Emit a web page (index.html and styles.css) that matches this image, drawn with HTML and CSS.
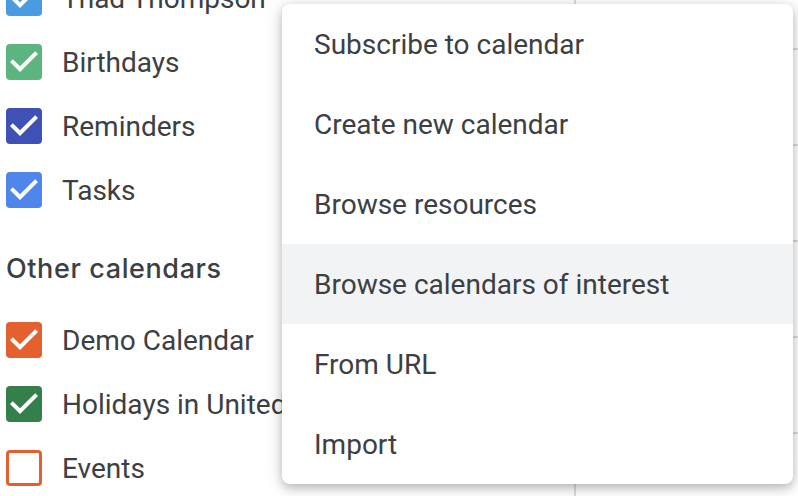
FILE: index.html
```html
<!DOCTYPE html>
<html lang="en">
<head>
    <meta charset="UTF-8">
    <meta name="viewport" content="width=device-width, initial-scale=1.0">
    <title>Calendars</title>
    <link rel="stylesheet" href="styles.css">
</head>
<body>
    <div class="page">
        <aside class="sidebar">
            <ul class="cal-list">
                <li class="cal-item"><span class="box blue"><svg viewBox="3 3 18 18"><path d="M10 17l-5-5 1.41-1.41L10 14.17l7.59-7.59L19 8l-9 9z"/></svg></span>Thad Thompson</li>
                <li class="cal-item"><span class="box green"><svg viewBox="3 3 18 18"><path d="M10 17l-5-5 1.41-1.41L10 14.17l7.59-7.59L19 8l-9 9z"/></svg></span>Birthdays</li>
                <li class="cal-item"><span class="box indigo"><svg viewBox="3 3 18 18"><path d="M10 17l-5-5 1.41-1.41L10 14.17l7.59-7.59L19 8l-9 9z"/></svg></span>Reminders</li>
                <li class="cal-item"><span class="box sky"><svg viewBox="3 3 18 18"><path d="M10 17l-5-5 1.41-1.41L10 14.17l7.59-7.59L19 8l-9 9z"/></svg></span>Tasks</li>
            </ul>
            <h2 class="cal-heading">Other calendars</h2>
            <ul class="cal-list">
                <li class="cal-item"><span class="box orange"><svg viewBox="3 3 18 18"><path d="M10 17l-5-5 1.41-1.41L10 14.17l7.59-7.59L19 8l-9 9z"/></svg></span>Demo Calendar</li>
                <li class="cal-item"><span class="box forest"><svg viewBox="3 3 18 18"><path d="M10 17l-5-5 1.41-1.41L10 14.17l7.59-7.59L19 8l-9 9z"/></svg></span>Holidays in United States</li>
                <li class="cal-item"><span class="box empty"></span>Events</li>
            </ul>
        </aside>

        <div class="grid">
            <div class="grid-row"></div>
            <div class="grid-row"></div>
            <div class="grid-row"></div>
            <div class="grid-row"></div>
            <div class="grid-row"></div>
            <div class="grid-row"></div>
        </div>

        <!-- меню добавления календаря -->
        <ul class="menu">
            <li class="menu-item">Subscribe to calendar</li>
            <li class="menu-item">Create new calendar</li>
            <li class="menu-item">Browse resources</li>
            <li class="menu-item active">Browse calendars of interest</li>
            <li class="menu-item">From URL</li>
            <li class="menu-item">Import</li>
        </ul>
    </div>
</body>
</html>
```

FILE: styles.css
```css
body {
    margin: 0;
    padding: 0;
    background-color: #fff;
    color: #3c4043;
    font-family: 'Roboto', 'Liberation Sans', sans-serif;
}

.page {
    position: relative;
    width: 798px;
    height: 496px;
    overflow: hidden;
    display: flex;
}

.sidebar {
    width: 574px;
    flex-shrink: 0;
    margin-top: -34px;
    white-space: nowrap;
    overflow: hidden;
}

.cal-list {
    list-style: none;
    margin: 0;
    padding: 0;
}

.cal-item {
    display: flex;
    align-items: center;
    height: 64px;
    padding-left: 6px;
    font-size: 28px;
    gap: 20px;
}

.box {
    width: 36px;
    height: 36px;
    border-radius: 4px;
    flex-shrink: 0;
    box-sizing: border-box;
}

.box svg {
    display: block;
    width: 36px;
    height: 36px;
    fill: #fff;
}

.blue { background-color: #4a9be0; }
.green { background-color: #5cb57f; }
.indigo { background-color: #3f51b5; }
.sky { background-color: #4f86ec; }
.orange { background-color: #e4612f; }
.forest { background-color: #33804a; }

.empty {
    border: 3px solid #e4612f;
}

.cal-heading {
    margin: 0;
    height: 86px;
    box-sizing: border-box;
    padding: 32px 0 0 6px;
    font-family: 'Inter', 'Open Sans', sans-serif;
    font-weight: 500;
    font-size: 27px;
    line-height: 30px;
    letter-spacing: 0.6px;
}

.grid {
    flex: 1;
    border-left: 2px solid #dadce0;
    padding-top: 48px;
}

.grid-row {
    height: 96px;
    border-top: 2px solid #dadce0;
    box-sizing: border-box;
}

.menu {
    position: absolute;
    left: 282px;
    top: 4px;
    width: 511px;
    margin: 0;
    padding: 0;
    list-style: none;
    background-color: #fff;
    border-radius: 8px;
    box-shadow: 0 4px 10px rgba(0, 0, 0, 0.22), 0 2px 22px rgba(0, 0, 0, 0.12);
    overflow: hidden;
}

.menu-item {
    height: 80px;
    display: flex;
    align-items: center;
    padding-left: 32px;
    font-size: 28px;
}

.menu-item.active {
    background-color: #f1f3f4;
}
```
